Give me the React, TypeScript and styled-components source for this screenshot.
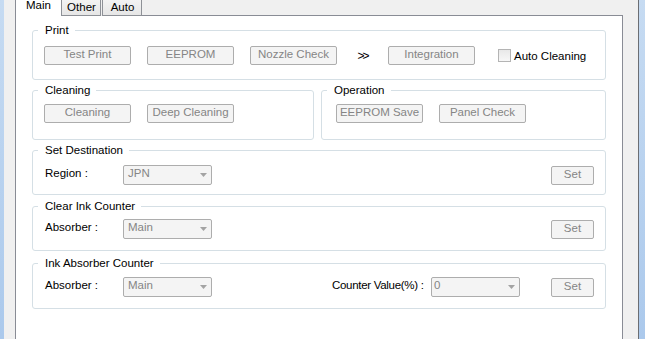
import styled, { createGlobalStyle } from 'styled-components';

const GlobalStyle = createGlobalStyle`
  html, body {
    margin: 0;
    padding: 0;
    height: 100%;
    overflow: hidden;
  }
  body {
    font-family: 'Liberation Sans', Arial, sans-serif;
    font-size: 11.5px;
    background: #f0f0f0;
    color: #000;
  }
  #root {
    height: 100%;
  }
`;

const Window = styled.div`
  display: flex;
  height: 100vh;
`;

const FrameLeft = styled.div`
  width: 4px;
  background: linear-gradient(#c6dbf2, #abc9ec);
`;

const FrameRight = styled.div`
  width: 6px;
  border-left: 1px solid #6b6e73;
  background: linear-gradient(#c6dbf2, #abc9ec);
`;

const Client = styled.div`
  flex: 1;
  display: flex;
  min-width: 0;
  padding: 0 15px 0 11px;
  background: #f0f0f0;
`;

const TabControl = styled.div`
  flex: 1;
  display: flex;
  flex-direction: column;
  min-width: 0;
`;

const TabStrip = styled.div`
  display: flex;
  height: 16px;
  flex-shrink: 0;
`;

const Tab = styled.div<{ $active?: boolean; $gap?: number }>`
  box-sizing: border-box;
  width: ${(p) => (p.$active ? 46 : 40)}px;
  margin-left: ${(p) => p.$gap ?? 0}px;
  text-align: center;
  line-height: 14px;
  ${(p) =>
    p.$active
      ? `
    background: #fff;
    border-left: 1px solid #898c95;
  `
      : `
    background: linear-gradient(#f3f3f3, #e6e6e6);
    border: 1px solid #8e9197;
    border-top: none;
  `}
`;

const TabLabel = styled.span<{ $active?: boolean }>`
  display: block;
  margin-top: ${(p) => (p.$active ? -2 : 0)}px;
  padding-left: ${(p) => (p.$active ? 0 : 1)}px;
`;

const TabFiller = styled.div`
  flex: 1;
  border-bottom: 1px solid #898c95;
`;

const Panel = styled.div`
  flex: 1;
  background: #fff;
  border-left: 1px solid #898c95;
  border-right: 1px solid #898c95;
  padding: 7px 16px 0;
`;

const GroupBox = styled.fieldset<{ $width?: number; $mt?: number }>`
  box-sizing: border-box;
  margin: ${(p) => p.$mt ?? 0}px 0 0;
  padding: 0;
  min-width: 0;
  width: ${(p) => (p.$width ? `${p.$width}px` : 'auto')};
  border: 1px solid #d5dfe5;
  border-radius: 3px;
`;

const Legend = styled.legend`
  margin-left: 5px;
  padding: 0 6px 0 7px;
  font-size: 11.5px;
  line-height: 14px;
  color: #000;
`;

const GroupBody = styled.div<{ $pad: string; $align?: string }>`
  display: flex;
  align-items: ${(p) => p.$align ?? 'center'};
  padding: ${(p) => p.$pad};
`;

const GroupRow = styled.div`
  display: flex;
  gap: 7px;
  margin-top: 3px;
`;

const Button = styled.button<{ $width?: number; $gap?: number; $height?: number }>`
  box-sizing: border-box;
  width: ${(p) => p.$width ?? 87}px;
  height: ${(p) => p.$height ?? 19}px;
  margin: 0 0 0 ${(p) => p.$gap ?? 0}px;
  padding: 0 0 2px;
  flex-shrink: 0;
  font-family: 'Liberation Sans', Arial, sans-serif;
  font-size: 11.5px;
  line-height: 15px;
  color: #858585;
  background: #f4f4f4;
  border: 1px solid #adadad;
  border-radius: 2px;
`;

const SetButton = styled(Button)`
  margin-top: 1px;
`;

const Chevrons = styled.span`
  width: 51px;
  flex-shrink: 0;
  text-align: center;
  letter-spacing: -2px;
  line-height: 14px;
  font-size: 12px;
`;

const CheckBox = styled.span`
  box-sizing: border-box;
  width: 13px;
  height: 13px;
  margin-left: 23px;
  border: 1px solid #b4b4b4;
  background: linear-gradient(#e8e8e8, #f7f7f7);
`;

const CheckText = styled.span`
  margin-left: 3px;
  line-height: 14px;
`;

const FieldLabel = styled.span<{ $width: number; $tight?: boolean }>`
  width: ${(p) => p.$width}px;
  flex-shrink: 0;
  padding-top: 1px;
  line-height: 14px;
  white-space: nowrap;
  letter-spacing: ${(p) => (p.$tight ? '-0.3px' : 'normal')};
`;

const ComboBox = styled.div<{ $textPad?: number }>`
  box-sizing: border-box;
  display: flex;
  justify-content: space-between;
  width: 89px;
  height: 20px;
  flex-shrink: 0;
  padding: 0 4px 0 ${(p) => p.$textPad ?? 4}px;
  border: 1px solid #adadad;
  border-radius: 2px;
  background: #f4f4f4;
  color: #858585;
  line-height: 14px;
`;

const ComboArrow = styled.svg`
  align-self: center;
  flex-shrink: 0;
`;

const RightGroup = styled.div`
  display: flex;
  align-items: flex-start;
  margin-left: auto;
`;

const Combo = ({ value, textPad }: { value: string; textPad?: number }) => (
  <ComboBox $textPad={textPad}>
    <span>{value}</span>
    <ComboArrow width="7" height="4" viewBox="0 0 7 4">
      <polygon points="0,0 7,0 3.5,4" fill="#a3a3a3" />
    </ComboArrow>
  </ComboBox>
);

const App = () => {
  return (
    <Window>
      <GlobalStyle />
      <FrameLeft />
      <Client>
        <TabControl>
          <TabStrip>
            <Tab $active>
              <TabLabel $active>Main</TabLabel>
            </Tab>
            <Tab>
              <TabLabel>Other</TabLabel>
            </Tab>
            <Tab $gap={1}>
              <TabLabel>Auto</TabLabel>
            </Tab>
            <TabFiller />
          </TabStrip>

          <Panel>
            {/* Print */}
            <GroupBox>
              <Legend>Print</Legend>
              <GroupBody $pad="9px 0 14px 11px">
                <Button disabled>Test Print</Button>
                <Button disabled $gap={16}>EEPROM</Button>
                <Button disabled $gap={16}>Nozzle Check</Button>
                <Chevrons>&gt;&gt;</Chevrons>
                <Button disabled>Integration</Button>
                <CheckBox />
                <CheckText>Auto Cleaning</CheckText>
              </GroupBody>
            </GroupBox>

            <GroupRow>
              <GroupBox $width={282}>
                <Legend>Cleaning</Legend>
                <GroupBody $pad="7px 0 16px 11px">
                  <Button disabled>Cleaning</Button>
                  <Button disabled $gap={16}>Deep Cleaning</Button>
                </GroupBody>
              </GroupBox>
              <GroupBox $width={285}>
                <Legend>Operation</Legend>
                <GroupBody $pad="7px 0 16px 14px">
                  <Button disabled>EEPROM Save</Button>
                  <Button disabled $gap={16}>Panel Check</Button>
                </GroupBody>
              </GroupBox>
            </GroupRow>

            <GroupBox $mt={3}>
              <Legend>Set Destination</Legend>
              <GroupBody $pad="8px 11px 9px 12px" $align="flex-start">
                <FieldLabel $width={78}>Region :</FieldLabel>
                <Combo value="JPN" />
                <RightGroup>
                  <SetButton disabled $width={43}>Set</SetButton>
                </RightGroup>
              </GroupBody>
            </GroupBox>

            <GroupBox $mt={4}>
              <Legend>Clear Ink Counter</Legend>
              <GroupBody $pad="6px 11px 11px 12px" $align="flex-start">
                <FieldLabel $width={78}>Absorber :</FieldLabel>
                <Combo value="Main" />
                <RightGroup>
                  <SetButton disabled $width={43}>Set</SetButton>
                </RightGroup>
              </GroupBody>
            </GroupBox>

            <GroupBox $mt={5}>
              <Legend>Ink Absorber Counter</Legend>
              <GroupBody $pad="7px 11px 11px 12px" $align="flex-start">
                <FieldLabel $width={78}>Absorber :</FieldLabel>
                <Combo value="Main" />
                <RightGroup>
                  <FieldLabel $width={99} $tight>Counter Value(%) :</FieldLabel>
                  <Combo value="0" textPad={2} />
                  <SetButton disabled $width={43} $gap={31}>Set</SetButton>
                </RightGroup>
              </GroupBody>
            </GroupBox>
          </Panel>
        </TabControl>
      </Client>
      <FrameRight />
    </Window>
  );
};

export default App;
